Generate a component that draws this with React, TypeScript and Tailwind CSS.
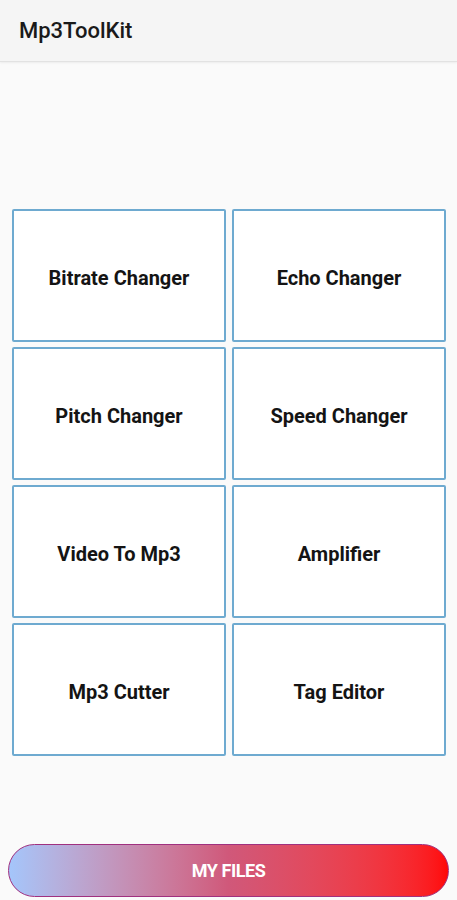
const tools = [
  'Bitrate Changer',
  'Echo Changer',
  'Pitch Changer',
  'Speed Changer',
  'Video To Mp3',
  'Amplifier',
  'Mp3 Cutter',
  'Tag Editor',
]

export default function App() {
  return (
    <div className="h-[900px] bg-[#fafafa] flex flex-col font-['Roboto',sans-serif]">
      <header className="h-[62px] bg-[#f5f5f5] border-b border-[#e2e2e2] shadow-[0_1px_2px_rgba(0,0,0,0.06)] flex items-center px-[19px]">
        <h1 className="text-[22px] font-medium text-[#1a1a1a]">Mp3ToolKit</h1>
      </header>

      <main className="flex-1 pt-[147px]">
        <div className="ml-[12px] w-[434px] grid grid-cols-2 gap-x-[6px] gap-y-[5px]">
          {tools.map((t) => (
            <button
              key={t}
              className="h-[133px] bg-white border-2 border-[#6eaad0] rounded-[2px] flex items-center justify-center pt-[4px] text-[20px] font-bold text-[#141414]"
            >
              {t}
            </button>
          ))}
        </div>
      </main>

      <div className="px-[8px] pb-[3px]">
        <button className="w-full h-[53px] rounded-full border border-[#a0307f] bg-gradient-to-r from-[#a4c6fb] via-[#d0587a] to-[#ff0606] text-white text-[18px] font-bold tracking-tight">
          MY FILES
        </button>
      </div>
    </div>
  )
}
